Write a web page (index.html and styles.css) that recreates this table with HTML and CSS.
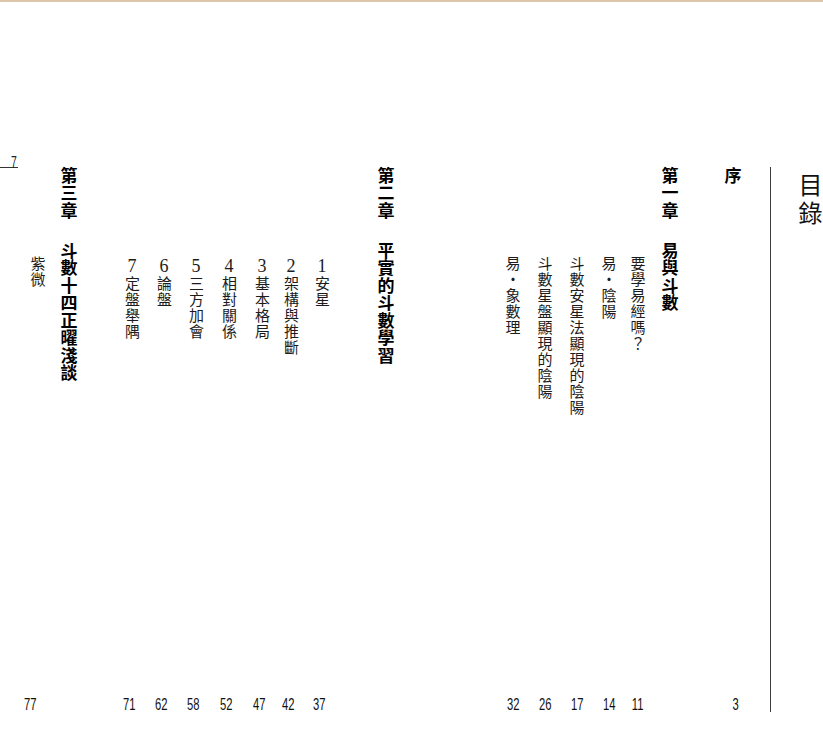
FILE: index.html
```html
<!DOCTYPE html>
<html lang="zh-Hant">
<head>
<meta charset="utf-8">
<title>目錄</title>
<link rel="stylesheet" href="styles.css">
</head>
<body>
<div class="page">
  <div class="contents">
    <div class="entry preface">
      <span class="head">序</span>
      <span class="num">3</span>
    </div>

    <div class="entry chapter ch1">
      <span class="head">第一章</span>
      <span class="head">易與斗數</span>
    </div>
    <div class="entry sub s1a">
      <span class="item">要學易經嗎？</span>
      <span class="num">11</span>
    </div>
    <div class="entry sub">
      <span class="item">易・陰陽</span>
      <span class="num">14</span>
    </div>
    <div class="entry sub">
      <span class="item">斗數安星法顯現的陰陽</span>
      <span class="num">17</span>
    </div>
    <div class="entry sub">
      <span class="item">斗數星盤顯現的陰陽</span>
      <span class="num">26</span>
    </div>
    <div class="entry sub s1e">
      <span class="item">易・象數理</span>
      <span class="num">32</span>
    </div>

    <div class="entry chapter ch2">
      <span class="head">第二章</span>
      <span class="head">平實的斗數學習</span>
    </div>
    <div class="entry sub sec2 s2a">
      <span class="item"><span class="ord">1</span>安星</span>
      <span class="num">37</span>
    </div>
    <div class="entry sub sec2 s2b">
      <span class="item"><span class="ord">2</span>架構與推斷</span>
      <span class="num">42</span>
    </div>
    <div class="entry sub sec2 s2c">
      <span class="item"><span class="ord">3</span>基本格局</span>
      <span class="num">47</span>
    </div>
    <div class="entry sub sec2 s2d">
      <span class="item"><span class="ord">4</span>相對關係</span>
      <span class="num">52</span>
    </div>
    <div class="entry sub sec2">
      <span class="item"><span class="ord">5</span>三方加會</span>
      <span class="num">58</span>
    </div>
    <div class="entry sub sec2">
      <span class="item"><span class="ord">6</span>論盤</span>
      <span class="num">62</span>
    </div>
    <div class="entry sub sec2 s2g">
      <span class="item"><span class="ord">7</span>定盤舉隅</span>
      <span class="num">71</span>
    </div>

    <div class="entry chapter ch3">
      <span class="head">第三章</span>
      <span class="head">斗數十四正曜淺談</span>
    </div>
    <div class="entry sub s3a">
      <span class="item">紫微</span>
      <span class="num num-shift">77</span>
    </div>

    <div class="folio"><span class="folio-num">7</span></div>
  </div>

  <div class="title">
    <h1 class="title-text">目錄</h1>
  </div>
</div>
</body>
</html>
```

FILE: styles.css
```css
html, body {
  margin: 0;
  padding: 0;
  background: #ffffff;
}

.page {
  box-sizing: border-box;
  width: 823px;
  height: 739px;
  overflow: hidden;
  border-top: 2px solid #dcc7a9;
  padding-top: 165px;
  display: flex;
  align-items: flex-start;
  font-family: "Noto Sans CJK TC", sans-serif;
  color: #111;
}

.contents {
  box-sizing: border-box;
  width: 770px;
  height: 545px;
  padding-right: 27px;
  display: flex;
  flex-direction: row-reverse;
  align-items: stretch;
}

.entry {
  width: 20px;
  flex: none;
  display: flex;
  flex-direction: column;
  align-items: center;
  margin-left: 12px;
}

.head,
.item {
  display: block;
  writing-mode: vertical-rl;
  text-orientation: upright;
  line-height: 1;
  white-space: nowrap;
}

.head {
  font-size: 17px;
  font-weight: 700;
  letter-spacing: 0.5px;
  color: #000;
}

.item {
  margin-top: 89px;
  font-family: "Noto Sans CJK TC", sans-serif;
  font-size: 15px;
  font-weight: 400;
  letter-spacing: 1px;
  color: #1c1c1c;
}

.ord {
  font-family: "Liberation Serif", "Times New Roman", serif;
  font-size: 18px;
  letter-spacing: 0;
}

.num {
  display: block;
  margin-top: auto;
  font-family: "Liberation Sans", Arial, sans-serif;
  font-size: 16.5px;
  line-height: 16px;
  color: #111;
  transform: scaleX(0.68);
}

.chapter {
  gap: 22px;
}

/* spacing between columns (space to the left neighbour) */
.preface { margin-left: 43px; }
.s1a { margin-left: 9px; }
.s1e { margin-left: 107px; }
.ch2 { margin-left: 44px; }
.s2a { margin-left: 11px; }
.s2b { margin-left: 9px; }
.s2c { margin-left: 13px; }
.s2d { margin-left: 13px; }
.s2g { margin-left: 43px; }
.ch3 { margin-left: 11px; }
.s3a { margin-left: auto; }

.preface .num { margin-left: 5px; }
.sec2 .num { margin-right: 6px; }
.num-shift { margin-right: 16px; }

.folio {
  box-sizing: border-box;
  width: 18px;
  height: 14px;
  margin-top: -13px;
  align-self: flex-start;
  border-bottom: 1px solid #333;
  text-align: right;
  line-height: 14px;
}

.folio-num {
  display: inline-block;
  font-family: "Liberation Sans", Arial, sans-serif;
  font-size: 16px;
  color: #222;
  transform: scaleX(0.65);
  transform-origin: right center;
  margin-right: 1px;
}

.title {
  box-sizing: border-box;
  width: 53px;
  height: 545px;
  border-left: 1px solid #3c3c3c;
  padding-left: 27px;
  flex: none;
}

.title-text {
  margin: 6px 0 0 0;
  writing-mode: vertical-rl;
  font-size: 24px;
  font-weight: 400;
  line-height: 1;
  letter-spacing: 4px;
  color: #111;
}
```
